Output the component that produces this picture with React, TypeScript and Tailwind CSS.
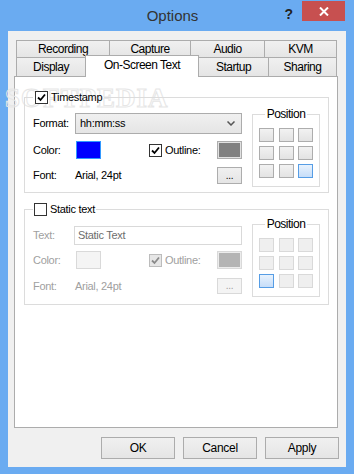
import React from "react";

const FONT = { fontFamily: '"Liberation Sans", Arial, sans-serif' };

function Check({ checked, disabled }: { checked?: boolean; disabled?: boolean }) {
  return (
    <span
      className={
        "flex h-[13px] w-[13px] shrink-0 items-center justify-center border " +
        (disabled ? "border-[#bcbcbc] bg-[#e6e6e6]" : "border-[#333333] bg-white")
      }
    >
      {checked && (
        <svg width="9" height="9" viewBox="0 0 9 9">
          <path
            d="M1 4.5 L3.5 7 L8 1.5"
            fill="none"
            stroke={disabled ? "#8a8a8a" : "#000"}
            strokeWidth="1.8"
          />
        </svg>
      )}
    </span>
  );
}

function PositionBox({ selected, disabled, className }: { selected: number; disabled?: boolean; className: string }) {
  return (
    <fieldset className={"w-[68px] shrink-0 border border-[#dcdcdc] px-[6px] pb-[8px] " + className}>
      <legend className="mx-auto px-[2px] text-[12px] leading-[13px] tracking-[-0.5px] text-black">Position</legend>
      <div className="grid grid-cols-[15px_15px_15px] gap-x-[4.5px] gap-y-[4px] pt-[7px]">
        {[0, 1, 2, 3, 4, 5, 6, 7, 8].map((i) => (
          <div
            key={i}
            className={
              "h-[14px] border " +
              (i === selected
                ? "border-[#569de5] bg-gradient-to-b from-[#e8f2fd] to-[#c6ddf8]"
                : disabled
                  ? "border-[#d9d9d9] bg-[#efefef]"
                  : "border-[#adadad] bg-gradient-to-b from-[#f2f2f2] to-[#e3e3e3]")
            }
          />
        ))}
      </div>
    </fieldset>
  );
}

function Tab({ label, w, selected, first }: { label: string; w: string; selected?: boolean; first?: boolean }) {
  return (
    <div
      className={
        "flex items-center justify-center border border-b-0 border-[#acacac] text-[12px] tracking-[-0.5px] text-black " +
        w +
        (first ? "" : " -ml-px") +
        (selected ? " relative z-10 -mb-px h-[22px] bg-white pb-[3px]" : " h-full bg-gradient-to-b from-[#f0f0f0] to-[#e5e5e5]")
      }
    >
      {label}
    </div>
  );
}

function Button({ label }: { label: string }) {
  return (
    <button className="flex h-[22px] w-[74px] items-center justify-center border border-[#acacac] bg-gradient-to-b from-[#f0f0f0] to-[#e5e5e5] text-[12px] text-black">
      {label}
    </button>
  );
}

export default function App() {
  return (
    <div className="flex h-[474px] w-[354px] flex-col bg-[#6aabf1]" style={FONT}>
      {/* title bar */}
      <div className="flex h-[31px] shrink-0">
        <div className="flex-1" />
        <div className="pt-[5px] text-[15px] text-[#333]">Options</div>
        <div className="flex flex-1 items-start justify-end pr-[9px]">
          <span className="mr-[9px] mt-[4px] text-[14px] font-bold text-[#222]">?</span>
          <div className="mt-px flex h-[20px] w-[43px] items-center justify-center bg-[#c75050]">
            <svg width="10" height="9" viewBox="0 0 10 9">
              <path d="M1 0.5 L9 8.5 M9 0.5 L1 8.5" stroke="#fff" strokeWidth="2" />
            </svg>
          </div>
        </div>
      </div>

      {/* client */}
      <div className="mx-[8px] mb-[7px] flex flex-1 flex-col bg-[#f0f0f0] pt-[9px] text-[11px] tracking-[-0.3px]">
        <div className="ml-[8px] flex flex-col">
          <div className="flex h-[17px]">
            <Tab label="Recording" w="w-[94px]" first />
            <Tab label="Capture" w="w-[82px]" />
            <Tab label="Audio" w="w-[75px]" />
            <Tab label="KVM" w="w-[73px]" />
          </div>
          <div className="flex h-[19px] items-end">
            <Tab label="Display" w="w-[70px]" first />
            <Tab label="On-Screen Text" w="w-[114px]" selected />
            <Tab label="Startup" w="w-[71px]" />
            <Tab label="Sharing" w="w-[69px]" />
          </div>
        </div>

        <div className="relative ml-[6px] h-[352px] w-[324px] border border-[#acacac] bg-white">
          {/* watermark */}
          <div
            className="pointer-events-none absolute left-[-10px] top-[8px] text-[27px] font-bold leading-none tracking-[1px] text-transparent [-webkit-text-stroke:1px_#e6e6e6]"
            style={{ fontFamily: '"Liberation Serif", serif' }}
          >
            SOFTPEDIA
          </div>

          {/* Timestamp group */}
          <fieldset className="relative ml-[9px] mt-[14px] w-[305px] border border-[#dcdcdc] pb-[5px] pl-[8px] pr-[8px]">
            <legend className="flex h-[13px] items-center gap-[3px] px-[2px]">
              <Check checked />
              <span className="text-black">Timestamp</span>
            </legend>
            <div className="flex items-start">
              <div className="flex w-[209px] flex-col pt-[9px]">
                <div className="flex h-[21px] items-center">
                  <span className="w-[42px]">Format:</span>
                  <div className="flex h-[21px] flex-1 items-center border border-[#acacac] bg-gradient-to-b from-[#f0f0f0] to-[#e5e5e5] pl-[4px] pr-[6px]">
                    <span className="flex-1">hh:mm:ss</span>
                    <svg width="8" height="5" viewBox="0 0 8 5">
                      <path d="M0.5 0.5 L4 4 L7.5 0.5" fill="none" stroke="#555" strokeWidth="1.5" />
                    </svg>
                  </div>
                </div>
                <div className="mt-[7px] flex h-[18px] items-center">
                  <span className="w-[42px]">Color:</span>
                  <div className="ml-px h-[18px] w-[25px] border border-[#3399ff] bg-[#0000ff]" />
                  <div className="ml-[48px] flex items-center gap-[3px]">
                    <Check checked />
                    <span>Outline:</span>
                  </div>
                  <div className="ml-auto h-[18px] w-[25px] border border-[#adadad] bg-[#e1e1e1] p-px">
                    <div className="h-full w-full bg-[#808080]" />
                  </div>
                </div>
                <div className="mt-[8px] flex h-[17px] items-center">
                  <span className="w-[42px]">Font:</span>
                  <span>Arial, 24pt</span>
                  <div className="ml-auto flex h-[17px] w-[25px] items-center justify-center border border-[#adadad] bg-gradient-to-b from-[#f0f0f0] to-[#e5e5e5] text-[10px] leading-none">
                    ...
                  </div>
                </div>
              </div>
              <PositionBox selected={8} className="ml-[10px] mt-[4px]" />
            </div>
          </fieldset>

          {/* Static text group */}
          <fieldset className="ml-[9px] mt-[10px] w-[305px] border border-[#dcdcdc] pb-[7px] pl-[8px] pr-[8px]">
            <legend className="flex h-[13px] items-center gap-[3px] px-[1px]">
              <Check />
              <span className="text-black">Static text</span>
            </legend>
            <div className="flex items-start text-[#a0a0a0]">
              <div className="flex w-[209px] flex-col pt-[10px]">
                <div className="flex h-[19px] items-center">
                  <span className="w-[41px]">Text:</span>
                  <div className="flex h-[19px] flex-1 items-center border border-[#d9d9d9] bg-white pl-[3px] text-[#6d6d6d]">
                    Static Text
                  </div>
                </div>
                <div className="mt-[6px] flex h-[18px] items-center">
                  <span className="w-[42px]">Color:</span>
                  <div className="ml-px h-[18px] w-[25px] border border-[#d9d9d9] bg-[#f4f4f4]" />
                  <div className="ml-[48px] flex items-center gap-[3px]">
                    <Check checked disabled />
                    <span>Outline:</span>
                  </div>
                  <div className="ml-auto h-[18px] w-[25px] border border-[#d9d9d9] bg-[#ececec] p-px">
                    <div className="h-full w-full bg-[#b4b4b4]" />
                  </div>
                </div>
                <div className="mt-[9px] flex h-[16px] items-center">
                  <span className="w-[42px]">Font:</span>
                  <span>Arial, 24pt</span>
                  <div className="ml-auto flex h-[16px] w-[25px] items-center justify-center border border-[#d9d9d9] bg-[#f4f4f4] text-[10px] leading-none">
                    ...
                  </div>
                </div>
              </div>
              <PositionBox selected={6} disabled className="ml-[10px] mt-[2px]" />
            </div>
          </fieldset>
        </div>

        <div className="mt-[9px] flex justify-end gap-[8px] pr-[7px]">
          <Button label="OK" />
          <Button label="Cancel" />
          <Button label="Apply" />
        </div>
      </div>
    </div>
  );
}
